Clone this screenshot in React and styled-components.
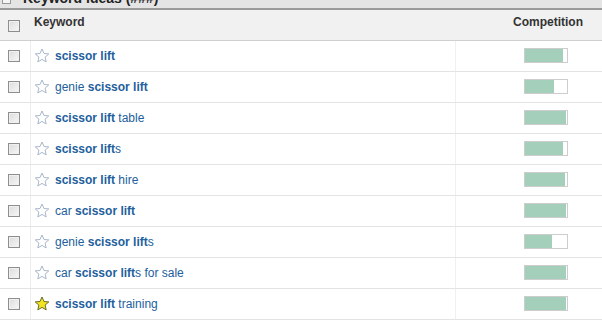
import React from "react";
import styled, { createGlobalStyle } from "styled-components";

const Global = createGlobalStyle`
  html, body { margin: 0; padding: 0; background: #fff; }
  body { font-family: "Liberation Sans", Arial, sans-serif; overflow: hidden; }
`;

const Page = styled.div`
  width: 602px;
  height: 324px;
  overflow: hidden;
  background: #fff;
`;

const TitleBand = styled.div`
  height: 8px;
  overflow: hidden;
  background: #e4e4e4;
  border-bottom: 2px solid #9a9a9a;
  display: flex;
  align-items: flex-start;
  padding-left: 2px;
  gap: 12px;
`;

const Collapse = styled.span`
  width: 9px;
  height: 9px;
  margin-top: -5px;
  border: 1px solid #999;
  background: #f4f4f4;
  box-sizing: border-box;
`;

const Title = styled.span`
  margin-top: -10px;
  font-size: 14px;
  line-height: 16px;
  font-weight: bold;
  color: #222;
`;

const Row = styled.div`
  display: flex;
  height: 30px;
  border-bottom: 1px solid ${(p) => (p.$head ? "#cfcfcf" : "#e3e3e3")};
  background: ${(p) => (p.$head ? "#f1f1f1" : "#fff")};
`;

const CheckCell = styled.div`
  width: 31px;
  flex: none;
  display: flex;
  align-items: center;
  padding-left: 8px;
  box-sizing: border-box;
  border-right: 1px solid ${(p) => (p.$head ? "transparent" : "#ececec")};
`;

const KeywordCell = styled.div`
  width: 425px;
  flex: none;
  display: flex;
  align-items: center;
  gap: 5px;
  padding-left: 3px;
  padding-bottom: 1px;
  box-sizing: border-box;
  border-right: 1px solid ${(p) => (p.$head ? "transparent" : "#f0f0f0")};
  font-size: 12px;
  color: #23609c;
  ${(p) => p.$head && `align-items: flex-start; padding-top: 5px; padding-bottom: 0; color: #333; font-weight: bold;`}
`;

const CompCell = styled.div`
  flex: 1;
  display: flex;
  align-items: center;
  padding-left: 68px;
  padding-bottom: 1px;
  font-size: 12px;
  ${(p) => p.$head && `align-items: flex-start; padding-top: 5px; padding-bottom: 0; padding-left: 57px; color: #333; font-weight: bold;`}
`;

const Box = styled.span`
  width: 12px;
  height: 12px;
  box-sizing: border-box;
  border: 1px solid #8e8e8e;
  background: linear-gradient(135deg, #dcdcdc, #f7f7f7);
  box-shadow: inset 0 0 0 1px #f0f0f0;
  ${(p) => p.$head && `margin-top: 2px;`}
`;

const B = styled.b`
  font-weight: bold;
`;

const Bar = styled.span`
  width: 44px;
  height: 15px;
  box-sizing: border-box;
  border: 1px solid #cdcdcd;
  background: #fff;
  display: flex;
`;

const Fill = styled.span`
  height: 100%;
  background: #a3cfbb;
`;

const Star = ({ on }) => (
  <svg width="16" height="16" viewBox="0 0 16 16">
    <path
      d="M8 1 L10 5.5 L14.8 5.9 L11.1 9.1 L12.2 13.9 L8 11.4 L3.8 13.9 L4.9 9.1 L1.2 5.9 L6 5.5 Z"
      fill={on ? "#f3e421" : "none"}
      stroke={on ? "#6b6b2a" : "#a9b7c8"}
      strokeWidth="1"
      strokeLinejoin="round"
    />
  </svg>
);

const rows = [
  { parts: [["scissor lift", 1]], fill: 38 },
  { parts: [["genie ", 0], ["scissor lift", 1]], fill: 29 },
  { parts: [["scissor lift", 1], [" table", 0]], fill: 41 },
  { parts: [["scissor lift", 1], ["s", 0]], fill: 38 },
  { parts: [["scissor lift", 1], [" hire", 0]], fill: 40 },
  { parts: [["car ", 0], ["scissor lift", 1]], fill: 41 },
  { parts: [["genie ", 0], ["scissor lift", 1], ["s", 0]], fill: 27 },
  { parts: [["car ", 0], ["scissor lift", 1], ["s for sale", 0]], fill: 41 },
  { parts: [["scissor lift", 1], [" training", 0]], fill: 41, star: true },
];

export default function App() {
  return (
    <Page>
      <Global />
      <TitleBand>
        <Collapse />
        <Title>Keyword ideas (###)</Title>
      </TitleBand>
      <Row $head>
        <CheckCell $head>
          <Box $head />
        </CheckCell>
        <KeywordCell $head>Keyword</KeywordCell>
        <CompCell $head>Competition</CompCell>
      </Row>
      {rows.map((r, i) => (
        <Row key={i}>
          <CheckCell>
            <Box />
          </CheckCell>
          <KeywordCell>
            <Star on={r.star} />
            <span>
              {r.parts.map(([t, b], j) => (b ? <B key={j}>{t}</B> : <span key={j}>{t}</span>))}
            </span>
          </KeywordCell>
          <CompCell>
            <Bar>
              <Fill style={{ width: r.fill + "px" }} />
            </Bar>
          </CompCell>
        </Row>
      ))}
    </Page>
  );
}
